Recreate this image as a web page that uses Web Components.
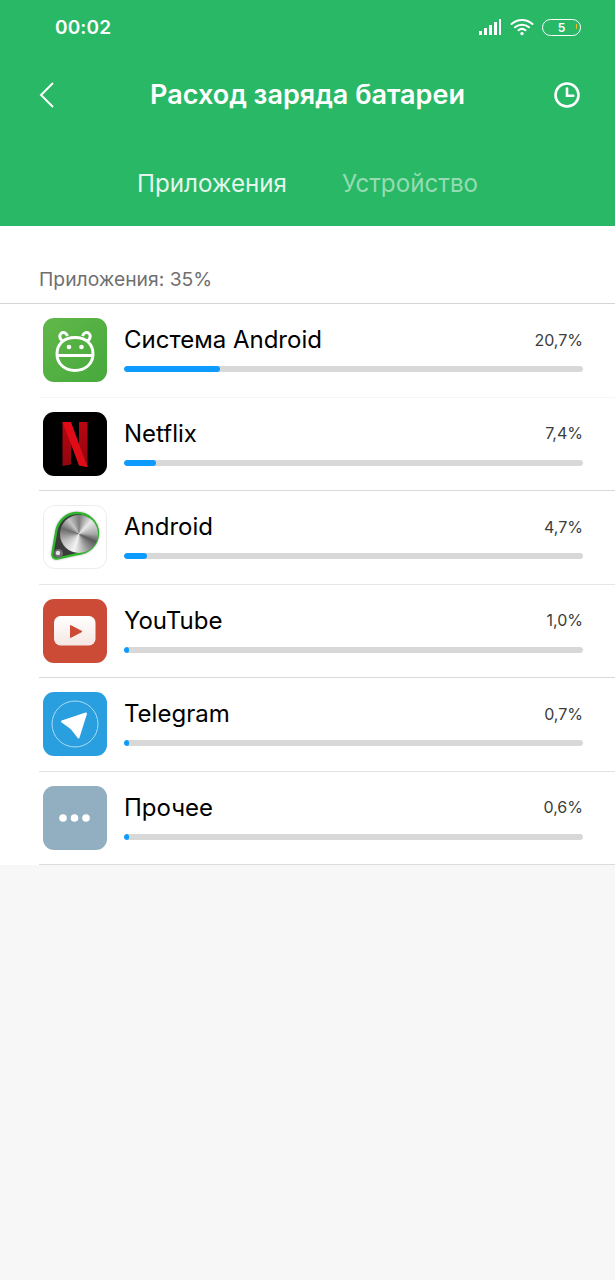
<!DOCTYPE html>
<html><head><meta charset="utf-8"><style>
html,body{margin:0;padding:0;background:#f7f7f7;font-family:Inter,"Noto Sans",sans-serif}
body{width:615px;height:1280px;overflow:hidden}
</style></head><body>
<battery-screen>
  <status-bar slot="header"></status-bar>
  <title-bar slot="header" title-text="Расход заряда батареи"></title-bar>
  <tab-bar slot="header"></tab-bar>
  <div slot="caption">Приложения: 35%</div>
  <app-row name="Система Android" value="20,7%" pct="21" line="#f6f6f6"><app-icon kind="android"></app-icon></app-row>
  <app-row name="Netflix" value="7,4%" pct="7" line="#d9d9d9"><app-icon kind="netflix"></app-icon></app-row>
  <app-row name="Android" value="4,7%" pct="5" line="#e6e6e6"><app-icon kind="knob"></app-icon></app-row>
  <app-row name="YouTube" value="1,0%" pct="1" line="#d9d9d9"><app-icon kind="youtube"></app-icon></app-row>
  <app-row name="Telegram" value="0,7%" pct="1" line="#e2e2e2"><app-icon kind="telegram"></app-icon></app-row>
  <app-row name="Прочее" value="0,6%" pct="1" line="#dcdcdc"><app-icon kind="other"></app-icon></app-row>
</battery-screen>
<script>
function def(name,html,init){
  customElements.define(name,class extends HTMLElement{
    constructor(){super();this.attachShadow({mode:'open'}).innerHTML=typeof html==='function'?'':html;}
    connectedCallback(){if(typeof html==='function')this.shadowRoot.innerHTML=html(this);if(init)init(this);}
  });
}
def('battery-screen',`<style>
:host{display:block;width:615px;height:1280px;color:#000}
header{background:#29b866;height:226px;display:flex;flex-direction:column}
main{background:#fff;height:639px;display:flex;flex-direction:column}
.cap{height:78px;box-sizing:border-box;padding:40px 0 0 39px;font-size:19.300px;line-height:26px;color:#6f6f6f;border-bottom:1px solid #d4d4d4}
.rows{display:grid;grid-auto-rows:93.5px;padding-left:39px}
</style><header><slot name="header"></slot></header><main><div class="cap"><slot name="caption"></slot></div><div class="rows"><slot></slot></div></main>`);
def('status-bar',`<style>
:host{display:flex;height:54px;box-sizing:border-box;padding:0 34px 0 55px;align-items:center;color:#fff;justify-content:space-between}
b{font-size:19px;font-weight:600;letter-spacing:.15px}
.r{display:flex;align-items:center;gap:8px}
.bat{width:39px;height:17px;box-sizing:border-box;border:1.5px solid #fff;border-radius:8.500px;font-size:12px;font-weight:600;display:flex;align-items:center;justify-content:center;position:relative}
.bat i{position:absolute;right:3px;top:4.500px;width:1.500px;height:5px;background:#e6c02c}
</style><b>00:02</b><div class="r">
<svg width="24" height="18" viewBox="0 0 24 18" fill="#fff"><rect x="1" y="13" width="3" height="4"/><rect x="6" y="10" width="3" height="7"/><rect x="11" y="7" width="3" height="10"/><rect x="16" y="4" width="3" height="13"/><rect x="21" y="1" width="2" height="16"/></svg>
<svg width="24" height="18" viewBox="0 0 24 18" fill="none" stroke="#fff" stroke-width="2" stroke-linecap="round"><path d="M1.500 6C7.500 .5 16.500 .5 22.500 6"/><path d="M5 9.300C9 5.800 15 5.800 19 9.300"/><path d="M8.500 12.300C10.500 10.700 13.500 10.700 15.500 12.300"/><circle cx="12" cy="15.600" r="1.700" fill="#fff" stroke="none"/></svg>
<div class="bat">5<i></i></div></div>`);
def('title-bar',t=>`<style>
:host{display:flex;height:82px;align-items:center;justify-content:center;position:relative;color:#fff}
h1{margin:0;font-size:27px;font-weight:600;letter-spacing:0;position:relative;top:-1px}
.b{position:absolute;left:38px;top:27px}.c{position:absolute;left:552px;top:26px}
</style><svg class="b" width="18" height="28" viewBox="0 0 18 28" fill="none" stroke="#fff" stroke-width="2"><path d="M15 2 3 14l12 12"/></svg>
<h1>${t.getAttribute('title-text')}</h1>
<svg class="c" width="30" height="30" viewBox="0 0 30 30" fill="none" stroke="#fff" stroke-width="2.600"><circle cx="15" cy="15" r="11.500"/><path d="M15 8.500v7.200h6.300" stroke-linecap="round"/></svg>`);
def('tab-bar',`<style>
:host{display:flex;justify-content:center;gap:55px;font-size:24.200px;height:90px;padding-top:29.500px;box-sizing:border-box;line-height:36px}
.a{color:#e4f6ec}.i{color:#95dcb3}
</style><span class="a">Приложения</span><span class="i">Устройство</span>`);
def('app-row',r=>`<style>
:host{display:flex;align-items:flex-start;height:93.5px;box-sizing:border-box;padding:14px 32px 0 4px;border-bottom:1px solid ${r.getAttribute('line')}}
.m{flex:1;margin-left:17px;min-width:0}
.t{display:flex;justify-content:space-between;align-items:center;height:42px;margin-top:.5px}
.n{font-size:24px}.v{font-size:16px;color:#3c3c3c}
.bar{height:6px;border-radius:3px;background:#d8d8d8;margin-top:5.500px;overflow:hidden}
.bar i{display:block;height:100%;min-width:5px;border-radius:3px;background:#0e9bff;width:${r.getAttribute('pct')}%}
</style><slot></slot><div class="m"><div class="t"><span class="n">${r.getAttribute('name')}</span><span class="v">${r.getAttribute('value')}</span></div><div class="bar"><i></i></div></div>`);
const knobPath="M33 8C45 7.500 55.500 17 55 29 54.500 40 46 48 35 49L14 53.500C10.500 54 8.500 51 9.500 48L13.500 25C16 15 24 8.500 33 8Z";
const icons={
android:`<defs><linearGradient id="g" x1="0" y1="0" x2="1" y2="1"><stop offset="0" stop-color="#62b84a"/><stop offset="1" stop-color="#46a83c"/></linearGradient></defs><rect width="64" height="64" rx="11" fill="url(#g)"/><g fill="none" stroke="#fff" stroke-width="3"><path d="M14 36C14 26 21 19.500 32 19.500S50 26 50 36C50 46 42 52.500 32 52.500S14 46 14 36Z"/><path d="M14 37.500h36"/><path d="M19.500 23c-3-2-3.500-5.500-1.500-7.500s5-1 6.500 2.500M44.500 23c3-2 3.500-5.500 1.500-7.500s-5-1-6.500 2.500"/></g><circle cx="26" cy="29" r="2.300" fill="#fff"/><circle cx="38.500" cy="29" r="2.300" fill="#fff"/>`,
netflix:`<defs><linearGradient id="n" x1="0" y1="0" x2="0" y2="1"><stop offset="0" stop-color="#b8060f"/><stop offset="1" stop-color="#8f0611"/></linearGradient></defs><rect width="64" height="64" rx="11" fill="#000"/><path d="M19.500 10H28V52.500L19.500 54zM36 10H44.500V55L36 53.500z" fill="url(#n)"/><path d="M19.500 10H28L44.500 55 36 53.500z" fill="#df0b16"/>`,
knob:`<defs><filter id="b" x="-20%" y="-20%" width="140%" height="140%"><feGaussianBlur stdDeviation="1.300"/></filter><filter id="b2" x="-20%" y="-20%" width="140%" height="140%"><feGaussianBlur stdDeviation=".5"/></filter></defs><rect x=".5" y=".5" width="63" height="63" rx="11" fill="#fff" stroke="#ececec"/><path d="${knobPath}" fill="#333" stroke="#555" stroke-width="2" opacity=".55" filter="url(#b)"/><path d="${knobPath}" fill="#3a3a3a" filter="url(#b2)"/><path d="${knobPath}" fill="none" stroke="#2fb62c" stroke-width="2.300" filter="url(#b2)"/><foreignObject x="16" y="9" width="40" height="40"><div xmlns="http://www.w3.org/1999/xhtml" style="width:38px;height:38px;margin:1px;border-radius:50%;background:conic-gradient(#7d7d7d,#e9e9e9 12%,#a8a8a8 25%,#5a5a5a 32%,#9a9a9a 42%,#f4f4f4 55%,#bdbdbd 68%,#6c6c6c 80%,#c4c4c4 90%,#7d7d7d)"></div></foreignObject><circle cx="15.500" cy="48.500" r="4.500" fill="#6d6d6d"/><circle cx="15" cy="48" r="2.200" fill="#e4e4e4"/>`,
youtube:`<defs><linearGradient id="y" x1="0" y1="0" x2="0" y2="1"><stop offset="0" stop-color="#fff"/><stop offset="1" stop-color="#f5e7e3"/></linearGradient></defs><rect width="64" height="64" rx="11" fill="#cb4b36"/><rect x="11" y="17" width="41.500" height="29.500" rx="6.500" fill="url(#y)"/><path d="M27.500 26.500 39 32.500 27.500 38.500z" fill="#cb4b36" stroke="#cb4b36" stroke-width="1" stroke-linejoin="round"/>`,
telegram:`<rect width="64" height="64" rx="11" fill="#2a9fe0"/><circle cx="32" cy="32" r="23" fill="none" stroke="#a9dcf5" stroke-width="1"/><path d="M19 29.500 43 21.500 35.500 45.500 28.500 36.500Z" fill="#fff" stroke="#fff" stroke-width="2" stroke-linejoin="round"/>`,
other:`<rect width="64" height="64" rx="11" fill="#92afc2"/><circle cx="20" cy="32" r="3.800" fill="#fff"/><circle cx="31.500" cy="32" r="3.800" fill="#fff"/><circle cx="43" cy="32" r="3.800" fill="#fff"/>`};
def('app-icon',e=>`<style>:host{display:block;width:64px;height:64px;flex:none}svg{display:block}</style><svg width="64" height="64" viewBox="0 0 64 64">${icons[e.getAttribute('kind')]}</svg>`);
</script></body></html>
